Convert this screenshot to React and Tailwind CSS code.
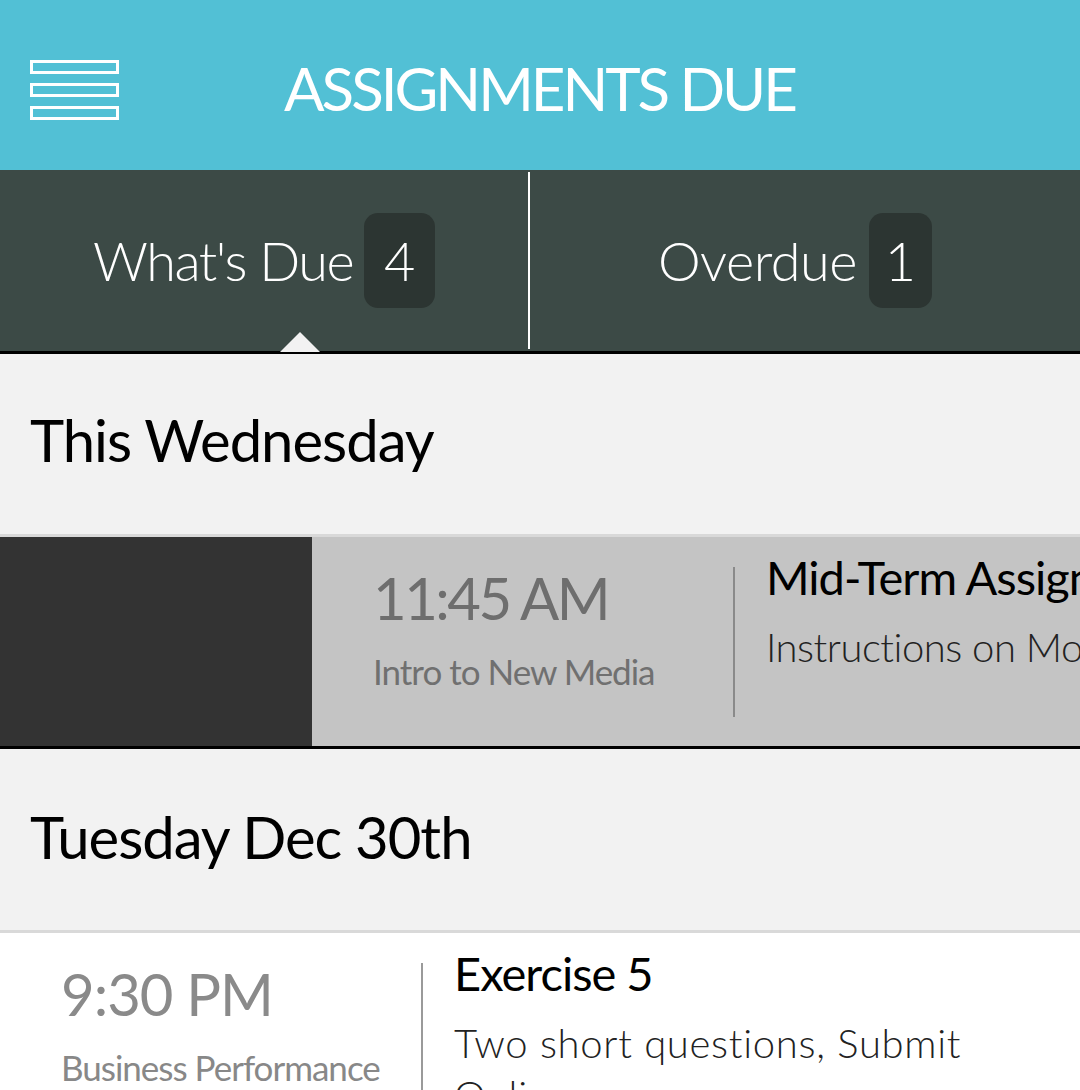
import React from "react";

const font = { fontFamily: "Lato, 'Noto Sans', sans-serif" };

function Hamburger() {
  return (
    <div className="flex flex-col gap-[9px] mt-[9px]">
      <div className="w-[89px] h-[14px] border-[3px] border-white" />
      <div className="w-[89px] h-[14px] border-[3px] border-white" />
      <div className="w-[89px] h-[14px] border-[3px] border-white" />
    </div>
  );
}

function Row({ time, course, title, desc, swiped, bg, timeTrack, descTrack }) {
  return (
    <div className={`flex w-[1080px] h-[209px] overflow-hidden ${bg}`}>
      {swiped && <div className="w-[312px] shrink-0 bg-[#333333]" />}
      <div className="flex shrink-0 pl-[61px] pt-[30px] whitespace-nowrap">
        <div className="w-[360px] shrink-0 flex flex-col">
          <div className={`text-[58px] leading-none mt-[2px] ${timeTrack} ${swiped ? "text-[#6e6e6e]" : "text-[#8a8a8a]"}`}>{time}</div>
          <div className={`text-[35px] leading-none tracking-[-1px] mt-[27px] ${swiped ? "text-[#707070]" : "text-[#888888]"}`}>{course}</div>
        </div>
        <div className={`w-[2px] h-[150px] shrink-0 ${swiped ? "bg-[#8a8a8a]" : "bg-[#9a9a9a]"}`} />
        <div className="pl-[31px] flex flex-col -mt-[17px]">
          <div className="text-[47px] leading-none tracking-[-1px] text-black mt-[4px]">{title}</div>
          <div className={`text-[40px] leading-[52px] ${descTrack} text-[#222222] font-light mt-[20px]`}>{desc}</div>
        </div>
      </div>
    </div>
  );
}

export default function App() {
  return (
    <div className="w-[1080px] h-[1090px] overflow-hidden bg-[#f2f2f2]" style={font}>
      <div className="h-[170px] bg-[#52c0d5] flex items-center pl-[30px]">
        <Hamburger />
        <div className="ml-[165px] text-white text-[60px] leading-none tracking-[-3px] mt-[6px]">ASSIGNMENTS DUE</div>
      </div>
      <div className="relative h-[184px] bg-[#3c4a46] border-b-[3px] border-black flex">
        <div className="w-[528px] flex items-center justify-center gap-[11px]">
          <span className="text-white text-[54px] font-light leading-none tracking-[-1.5px]">What's Due</span>
          <span className="w-[71px] h-[95px] rounded-[14px] bg-[#2c3532] text-white text-[54px] font-light flex items-center justify-center">4</span>
        </div>
        <div className="w-[2px] bg-white my-[2px]" />
        <div className="flex-1 flex items-center justify-center gap-[12px] pr-[20px]">
          <span className="text-white text-[54px] font-light leading-none tracking-[-0.5px]">Overdue</span>
          <span className="w-[63px] h-[95px] rounded-[14px] bg-[#2c3532] text-white text-[54px] font-light flex items-center justify-center">1</span>
        </div>
        <div className="absolute left-[280px] bottom-[-1px] w-0 h-0 border-l-[20px] border-r-[20px] border-b-[20px] border-l-transparent border-r-transparent border-b-[#f2f2f2]" />
      </div>
      <div className="h-[183px] flex items-center pl-[30px] pb-[8px] border-b-[3px] border-[#d9d9d9]">
        <span className="text-[58px] leading-none text-black tracking-[-1px]">This Wednesday</span>
      </div>
      <div className="border-b-[3px] border-black">
        <Row swiped bg="bg-[#c4c4c4]" timeTrack="tracking-[-2.5px]" descTrack="tracking-[-0.5px]" time="11:45 AM" course="Intro to New Media" title="Mid-Term Assignment" desc="Instructions on Moodle" />
      </div>
      <div className="h-[184px] flex items-center pl-[30px] pb-[6px] border-b-[3px] border-[#d9d9d9]">
        <span className="text-[58px] leading-none text-black tracking-[-1px]">Tuesday Dec 30th</span>
      </div>
      <Row bg="bg-white" timeTrack="tracking-[-1px]" descTrack="tracking-[0.7px]" time="9:30 PM" course="Business Performance" title="Exercise 5" desc={<>Two short questions, Submit<br />Online</>} />
    </div>
  );
}
